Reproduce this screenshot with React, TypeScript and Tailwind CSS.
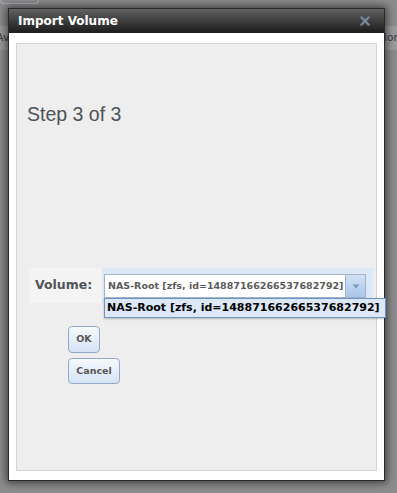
export default function App() {
  return (
    <div className="relative w-[397px] h-[493px] overflow-hidden bg-[#8d8d8d] font-['DejaVu_Sans',sans-serif]">
      {/* page behind the overlay */}
      <div className="h-[4px] w-[39px] rounded-b-[4px] border border-t-0 border-[#a4aebb]" />
      <div className="mt-[22px] h-[24px] bg-[#9b9b9b] flex items-center justify-between text-[11px] text-[#3a3a3a]">
        <span className="-ml-[4px]">Av</span>
        <span className="-mr-[1px]">ior</span>
      </div>

      {/* dialog */}
      <div className="absolute left-[8px] top-[8px] w-[377px] h-[473px] flex flex-col border border-[#2a2a2a] bg-white shadow-[0_0_8px_2px_rgba(0,0,0,0.55)]">
        {/* title bar */}
        <div className="h-[24px] flex items-center justify-between pl-[9px] pr-[14px] bg-linear-to-b from-[#626262] to-[#1c1c1c]">
          <span className="text-[12px] font-bold text-white leading-none">Import Volume</span>
          <svg width="10" height="10" viewBox="0 0 10 10">
            <path d="M1.5 1.5 L8.5 8.5 M8.5 1.5 L1.5 8.5" stroke="#66788b" strokeWidth="2.6" strokeLinecap="square" />
            <path d="M1.5 1.5 L8.5 8.5 M8.5 1.5 L1.5 8.5" stroke="#8496a8" strokeWidth="1" />
          </svg>
        </div>

        {/* body */}
        <div className="flex-1 flex flex-col pt-[10px] pl-[7px] pr-[7px] pb-[9px]">
          <div className="flex-1 flex flex-col border border-[#d3d3d3] bg-[#eeeeee]">
            <div className="mt-[59px] ml-[10px] text-[19.5px] leading-[22px] text-[#4d535a] font-['Liberation_Sans',sans-serif]">
              Step 3 of 3
            </div>

            {/* volume row */}
            <div className="mt-[143px] ml-[12px] flex h-[35px]">
              <div className="w-[73px] bg-[#f4f4f4] flex items-center pl-[6px]">
                <span className="text-[12.5px] font-bold text-[#4f545a]">Volume:</span>
              </div>
              <div className="relative w-[271px] bg-[#dde8f6] pt-[6px] pl-[2px]">
                <div className="w-[262px] h-[24px] flex border border-[#a4b4c8] bg-white">
                  <div className="flex-1 flex items-center pl-[3px] text-[9.5px] font-bold text-[#5a5a5a] whitespace-nowrap overflow-hidden">
                    NAS-Root [zfs, id=14887166266537682792]
                  </div>
                  <div className="w-[20px] flex items-center justify-center border-l border-[#9fb3cd] bg-linear-to-b from-[#d3e2f5] to-[#a9c6ea]">
                    <svg width="8" height="5" viewBox="0 0 8 5">
                      <path d="M0.5 0.5 L7.5 0.5 L4 4.5 Z" fill="#7f97b6" />
                    </svg>
                  </div>
                </div>
                {/* open dropdown list */}
                <div className="absolute left-[2px] top-[30px] w-[282px] h-[20px] flex items-center pl-[2px] border border-[#6f93c6] bg-[#dce8f8] shadow-[0_1px_2px_rgba(0,0,0,0.25)] text-[11px] font-bold text-black whitespace-nowrap">
                  NAS-Root [zfs, id=14887166266537682792]
                </div>
              </div>
            </div>

            {/* buttons */}
            <div className="ml-[51px] mt-[23px] flex flex-col items-start gap-[5px]">
              <button className="w-[32px] h-[27px] rounded-[4px] border border-[#93a9c8] bg-linear-to-b from-[#f6f9fd] to-[#d5e3f5] text-[9.5px] font-bold text-[#555]">
                OK
              </button>
              <button className="w-[52px] h-[26px] rounded-[4px] border border-[#93a9c8] bg-linear-to-b from-[#f6f9fd] to-[#d5e3f5] text-[9.5px] font-bold text-[#555]">
                Cancel
              </button>
            </div>
          </div>
        </div>
      </div>
    </div>
  );
}
